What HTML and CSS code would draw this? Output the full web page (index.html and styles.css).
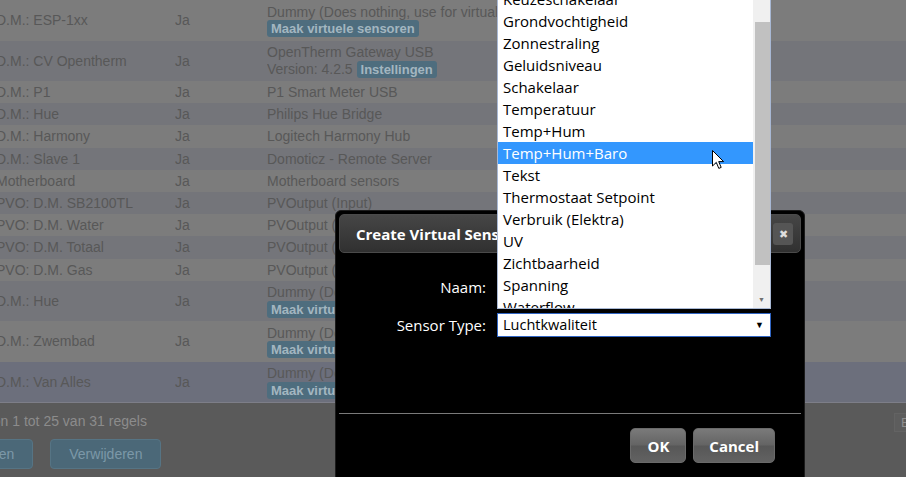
FILE: index.html
```html
<!DOCTYPE html>
<html lang="nl">
<head>
<meta charset="utf-8">
<title>Hardware</title>
<link rel="stylesheet" href="styles.css">
</head>
<body>
<div class="page">
  <table class="devices">
    <colgroup><col class="c-name"><col class="c-en"><col class="c-type"></colgroup>
    <tbody>
      <tr class="odd tall"><td>D.M.: ESP-1xx</td><td>Ja</td><td>Dummy (Does nothing, use for virtual switches only)<br><span class="badge">Maak virtuele sensoren</span></td></tr>
      <tr class="even tall"><td>D.M.: CV Opentherm</td><td>Ja</td><td>OpenTherm Gateway USB<br>Version: 4.2.5 <span class="badge">Instellingen</span></td></tr>
      <tr class="odd"><td>D.M.: P1</td><td>Ja</td><td>P1 Smart Meter USB</td></tr>
      <tr class="even"><td>D.M.: Hue</td><td>Ja</td><td>Philips Hue Bridge</td></tr>
      <tr class="odd"><td>D.M.: Harmony</td><td>Ja</td><td>Logitech Harmony Hub</td></tr>
      <tr class="even"><td>D.M.: Slave 1</td><td>Ja</td><td>Domoticz - Remote Server</td></tr>
      <tr class="odd"><td>Motherboard</td><td>Ja</td><td>Motherboard sensors</td></tr>
      <tr class="even"><td>PVO: D.M. SB2100TL</td><td>Ja</td><td>PVOutput (Input)</td></tr>
      <tr class="odd"><td>PVO: D.M. Water</td><td>Ja</td><td>PVOutput (Input)</td></tr>
      <tr class="even"><td>PVO: D.M. Totaal</td><td>Ja</td><td>PVOutput (Input)</td></tr>
      <tr class="odd"><td>PVO: D.M. Gas</td><td>Ja</td><td>PVOutput (Input)</td></tr>
      <tr class="even tall"><td>D.M.: Hue</td><td>Ja</td><td>Dummy (Does nothing, use for virtual switches only)<br><span class="badge">Maak virtuele sensoren</span></td></tr>
      <tr class="odd tall"><td>D.M.: Zwembad</td><td>Ja</td><td>Dummy (Does nothing, use for virtual switches only)<br><span class="badge">Maak virtuele sensoren</span></td></tr>
      <tr class="hover tall"><td>D.M.: Van Alles</td><td>Ja</td><td>Dummy (Does nothing, use for virtual switches only)<br><span class="badge">Maak virtuele sensoren</span></td></tr>
    </tbody>
  </table>
  <div class="table-foot">
    <div class="info-row">
      <span class="info">Toon 1 tot 25 van 31 regels</span>
      <div class="pager"><span class="pbtn">Eerste</span><span class="pbtn">Vorige</span></div>
    </div>
    <div class="actions">
      <span class="btn">Bewerken</span>
      <span class="btn">Verwijderen</span>
    </div>
  </div>
</div>

<div class="dialog">
  <div class="titlebar">
    <span class="title">Create Virtual Sensor</span>
    <span class="close">&#x2716;</span>
  </div>
  <div class="form">
    <div class="frow"><label class="lbl">Naam:</label><span class="field"></span></div>
    <div class="frow"><label class="lbl">Sensor Type:</label><span class="field select">Luchtkwaliteit<span class="arrow">&#9660;</span></span></div>
  </div>
  <div class="buttonpane">
    <span class="dbtn ok">OK</span>
    <span class="dbtn">Cancel</span>
  </div>
</div>

<div class="dropdown">
  <ul class="options">
    <li>Keuzeschakelaar</li>
    <li>Grondvochtigheid</li>
    <li>Zonnestraling</li>
    <li>Geluidsniveau</li>
    <li>Schakelaar</li>
    <li>Temperatuur</li>
    <li>Temp+Hum</li>
    <li class="sel">Temp+Hum+Baro</li>
    <li>Tekst</li>
    <li>Thermostaat Setpoint</li>
    <li>Verbruik (Elektra)</li>
    <li>UV</li>
    <li>Zichtbaarheid</li>
    <li>Spanning</li>
    <li>Waterflow</li>
  </ul>
  <div class="scrollbar"><div class="thumb"></div><span class="down">&#9660;</span></div>
</div>

<svg class="cursor" width="13" height="20" viewBox="0 0 13 20"><path d="M0.5 0.5 L0.5 16 L4.3 12.4 L6.8 18.4 L9.2 17.4 L6.7 11.6 L11.6 11.6 Z" fill="#fff" stroke="#000" stroke-width="1" stroke-linejoin="round"/></svg>
</body>
</html>
```
FILE: styles.css
```css
html, body {
  margin: 0;
  padding: 0;
  width: 906px;
  height: 477px;
  overflow: hidden;
  background: #5a5a5a;
}

.page {
  margin-left: -4px;
  width: 1100px;
  font-family: "Liberation Sans", Arial, sans-serif;
  font-size: 14px;
  color: #585858;
}

.devices {
  border-collapse: collapse;
  width: 1100px;
  table-layout: fixed;
}
.c-name { width: 179px; }
.c-en { width: 92px; }

.devices td {
  padding: 3px 0;
  line-height: 16.2px;
  vertical-align: middle;
  white-space: nowrap;
  overflow: hidden;
}
.devices tr.tall td { padding: 2px 0 2px; line-height: 16.5px; height: 36.5px; }
.devices tr.odd { background: #7c7c7c; }
.devices tr.even { background: #74757a; }
.devices tr.hover { background: #6c6f7c; }

.badge {
  display: inline-block;
  background: #4e6d7e;
  color: #a3b6c0;
  font-weight: bold;
  font-size: 13px;
  line-height: 15px;
  padding: 1px 4px;
  border-radius: 3px;
}

.table-foot {
  background: #5a5a5a;
  border-top: 1px solid #7d7e88;
  color: #8c8c8c;
}
.info-row {
  display: flex;
  align-items: center;
  height: 34px;
  padding-top: 2px;
}
.info {
  flex: 0 0 916px;
  margin-left: -18px;
  padding-bottom: 2px;
}
.pager { display: flex; gap: 4px; }
.pbtn {
  border: 1px solid #636363;
  padding: 1px 6px;
  color: #8e8e8e;
  font-size: 13px;
  background: #5d5d5d;
}
.actions {
  display: flex;
  gap: 17px;
  margin-left: -63px;
}
.btn {
  display: inline-block;
  background: #4b6878;
  border: 1px solid #567484;
  border-radius: 4px;
  color: #7c98a8;
  padding: 0 18px;
  line-height: 28px;
}

/* dialog */
.dialog {
  position: absolute;
  left: 335px;
  top: 210px;
  width: 462px;
  height: 290px;
  padding: 3px;
  background: #000;
  border: 1px solid #1c1c1c;
  border-radius: 6px;
  font-family: "Open Sans", "Noto Sans", sans-serif;
  color: #fff;
  display: flex;
  flex-direction: column;
}
.titlebar {
  height: 37px;
  display: flex;
  align-items: center;
  justify-content: space-between;
  padding: 0 7px 0 16px;
  background: linear-gradient(#464646, #303030);
  border: 1px solid #4a4a4a;
  border-radius: 5px;
}
.title {
  font-weight: bold;
  font-size: 15px;
  color: #fff;
}
.close {
  width: 20px;
  height: 22px;
  display: flex;
  align-items: center;
  justify-content: center;
  background: #555;
  border-radius: 3px;
  color: #ddd;
  font-size: 11px;
}
.form {
  display: flex;
  flex-direction: column;
  gap: 14px;
  padding-top: 22px;
  height: 138px;
  border-bottom: 1px solid #7a7a7a;
}
.frow {
  display: flex;
  align-items: center;
  gap: 11px;
  height: 24px;
}
.lbl {
  flex: 0 0 147px;
  text-align: right;
  font-size: 15px;
  color: #fff;
}
.field {
  position: relative;
  width: 272px;
  height: 22px;
  background: #fff;
  border: 1px solid #7a7a7a;
}
.field.select {
  border: 1px solid #3166c4;
  color: #000;
  font-size: 14.5px;
  line-height: 22px;
  padding-left: 5px;
  width: 267px;
  display: flex;
  align-items: center;
  justify-content: space-between;
}
.arrow {
  font-size: 9px;
  margin-right: 6px;
  color: #000;
}
.buttonpane {
  display: flex;
  justify-content: flex-end;
  gap: 7px;
  padding: 14px 26px 0 0;
}
.dbtn {
  height: 35px;
  padding: 0 15px;
  display: flex;
  align-items: center;
  border-radius: 5px;
  border: 1px solid #6a6a6a;
  background: linear-gradient(#7a7a7a, #646464 48%, #575757 52%, #626262);
  font-weight: bold;
  font-size: 15px;
  color: #fff;
  box-sizing: border-box;
}
.dbtn.ok { padding: 0 16px; }

/* dropdown list */
.dropdown {
  position: absolute;
  left: 497px;
  top: 0;
  width: 272px;
  height: 308px;
  background: #fff;
  border: 1px solid #a8b8d4;
  border-top: none;
  display: flex;
  overflow: hidden;
  font-family: "Open Sans", "Noto Sans", sans-serif;
}
.options {
  list-style: none;
  margin: -12px 0 0 0;
  padding: 0;
  flex: 1;
}
.options li {
  height: 22px;
  line-height: 22px;
  padding-left: 5px;
  font-size: 15px;
  color: #000;
  white-space: nowrap;
}
.options li.sel {
  background: #3397fe;
  color: #fff;
}
.scrollbar {
  position: relative;
  flex: 0 0 17px;
  background: #f0f0f0;
}
.thumb {
  position: absolute;
  left: 2px;
  right: 0;
  top: 22px;
  height: 243px;
  background: #c1c1c1;
}
.down {
  position: absolute;
  left: 5px;
  top: 295px;
  font-size: 7px;
  color: #707070;
}

.cursor {
  position: absolute;
  left: 712px;
  top: 150px;
}
```
